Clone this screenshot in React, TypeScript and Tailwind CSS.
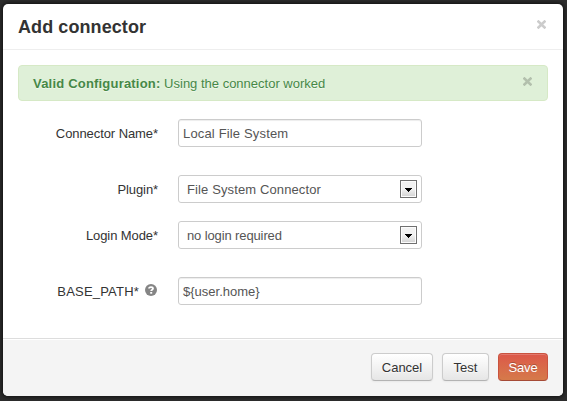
import React from "react";

function Close({ className = "" }: { className?: string }) {
  return (
    <button type="button" aria-label="Close" className={`flex h-[9px] w-[9px] ${className}`}>
      <svg width="9" height="9" viewBox="0 0 9 9" fill="none" stroke="currentColor" strokeWidth="2.7">
        <path d="M0.5 0.7L8.5 8.3M8.5 0.7L0.5 8.3" />
      </svg>
    </button>
  );
}

function Row({ label, help, className = "", labelClass, children }: {
  label: React.ReactNode;
  help?: boolean;
  className?: string;
  labelClass: string;
  children: React.ReactNode;
}) {
  return (
    <div className={`flex h-7 ${className}`}>
      <div className="flex w-[140px] items-center justify-end gap-[6px] whitespace-nowrap text-[#333]">
        <span className={`pt-0.5 ${labelClass}`}>{label}</span>
        {help && (
          <svg width="12" height="12" viewBox="0 0 12 12" className="mb-0.5 mr-px">
            <circle cx="6" cy="6" r="6" fill="#858585" />
            <path d="M4 4.6C4 2.5 8 2.5 8 4.6C8 5.8 6.2 5.7 6.2 7.1" fill="none" stroke="#fff" strokeWidth="1.8" />
            <rect x="5.2" y="8" width="2" height="1.7" fill="#fff" />
          </svg>
        )}
      </div>
      {children}
    </div>
  );
}

function Field({ value, className }: { value: string; className: string }) {
  return (
    <div className={`ml-5 flex h-7 w-[244px] items-center whitespace-nowrap rounded-[3px] border border-[#ccc] bg-white px-1 pt-0.5 text-[#555] shadow-[inset_0_1px_1px_rgba(0,0,0,0.075)] ${className}`}>
      {value}
    </div>
  );
}

function Select({ value, className }: { value: string; className: string }) {
  return (
    <div className="ml-5 flex h-7 w-[244px] items-center justify-between whitespace-nowrap rounded-[3px] border border-[#ccc] bg-white pl-2 pr-1 text-[#555]">
      <span className={`pt-0.5 ${className}`}>{value}</span>
      <span className="flex h-[18px] w-[17px] items-center justify-center border border-[#707070] bg-linear-to-b from-[#f2f2f2] from-50% to-[#d2d2d2] shadow-[inset_0_0_0_1px_#fcfcfc]">
        <svg width="7" height="4" viewBox="0 0 7 4" shapeRendering="crispEdges" className="mt-0.5">
          <path d="M0 0H7V1H6V2H5V3H4V4H3V3H2V2H1V1H0Z" fill="#000" />
        </svg>
      </span>
    </div>
  );
}

const button =
  "flex h-7 items-center justify-center whitespace-nowrap rounded-[4px] border pt-0.5";
const plain =
  "border-[#ccc] border-b-[#b3b3b3] bg-linear-to-b from-white to-[#e6e6e6] text-[#333] shadow-[inset_0_1px_0_rgba(255,255,255,0.2),0_1px_2px_rgba(0,0,0,0.05)] [text-shadow:0_1px_1px_rgba(255,255,255,0.75)]";

export default function App() {
  return (
    <div className="h-[401px] w-[567px] overflow-hidden bg-[#2d2d2d] pl-[3px] pt-1 font-['Liberation_Sans',Arial,sans-serif] text-[13px] leading-[18px]">
      <div className="flex h-[392px] w-[560px] flex-col overflow-hidden rounded-[5px] bg-white shadow-[0_0_4px_1px_rgba(0,0,0,0.65)]">
        <header className="flex h-[46px] items-center justify-between border-b border-[#eee] pl-[15px] pr-[17px]">
          <h3 className="whitespace-nowrap pt-0.5 text-[18px] font-bold leading-[27px] tracking-[0.08px] text-[#333]">Add connector</h3>
          <Close className="mb-1 text-[#ccc]" />
        </header>

        <main className="h-[288px] p-[15px]">
          <div className="flex h-9 w-[530px] items-center justify-between rounded-[4px] border border-[#d6e9c6] bg-[#dff0d8] pl-[14px] pr-[15px] text-[#468847] [text-shadow:0_1px_0_rgba(255,255,255,0.5)]">
            <span className="whitespace-nowrap pt-0.5">
              <strong className="tracking-[0.2px]">Valid Configuration:</strong> Using the connector worked
            </span>
            <Close className="mb-1 text-[#b3c0ad]" />
          </div>
          <form className="mt-[18px]">
            <Row label="Connector Name*" labelClass="tracking-[-0.08px]">
              <Field value="Local File System" className="tracking-[0.16px]" />
            </Row>
            <Row label="Plugin*" labelClass="tracking-[-0.1px]" className="mt-7">
              <Select value="File System Connector" className="tracking-[0.12px]" />
            </Row>
            <Row label="Login Mode*" labelClass="tracking-[-0.08px]" className="mt-[18px]">
              <Select value="no login required" className="tracking-[-0.12px]" />
            </Row>
            <Row label="BASE_PATH*" labelClass="tracking-[0.2px]" help className="mt-7">
              <Field value="${user.home}" className="tracking-normal" />
            </Row>
          </form>
        </main>

        <footer className="flex h-[58px] justify-end border-t border-[#ddd] bg-[#f4f4f4] pr-[15px] pt-[14px] shadow-[inset_0_1px_0_#fff]">
          <button type="button" className={`${button} ${plain} w-[62px]`}>Cancel</button>
          <button type="button" className={`${button} ${plain} ml-[9px] w-[47px]`}>Test</button>
          <button
            type="button"
            className={`${button} ml-[9px] w-[50px] border-[#c9533f] border-b-[#a54a36] bg-linear-to-b from-[#dc5749] to-[#d57a4a] tracking-[-0.2px] text-white shadow-[inset_0_1px_0_rgba(255,255,255,0.2)] [text-shadow:0_-1px_0_rgba(0,0,0,0.25)]`}
          >
            Save
          </button>
        </footer>
      </div>
    </div>
  );
}
